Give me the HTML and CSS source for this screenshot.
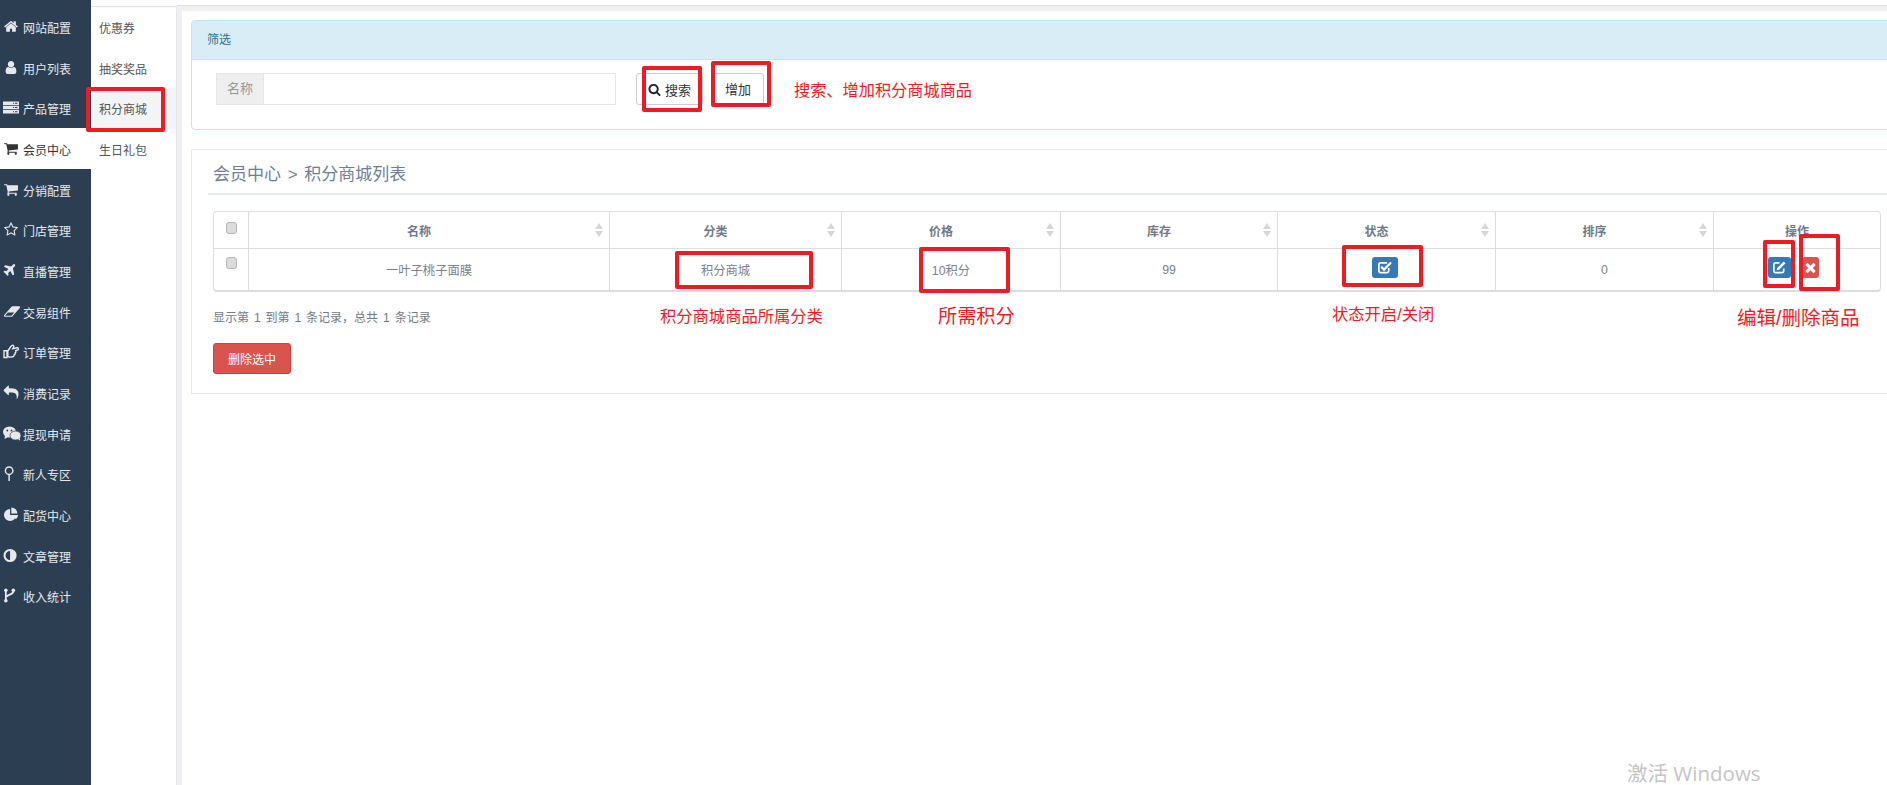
FILE: index.html
```html
<!DOCTYPE html>
<html lang="zh-CN">
<head>
<meta charset="utf-8">
<title>积分商城列表</title>
<link rel="stylesheet" href="styles.css">
</head>
<body>
<div class="app">
  <nav class="side">
    <a class="side-item"><svg class="ic" viewBox="0 0 1792 1792"><path d="M1472 992v480q0 26-19 45t-45 19h-384v-384h-256v384h-384q-26 0-45-19t-19-45v-480q0-1 .5-3t.5-3l575-474 575 474q1 2 1 6zm223-69l-62 74q-8 9-21 11h-3q-13 0-21-7l-692-577-692 577q-12 8-24 7-13-2-21-11l-62-74q-8-10-7-23.500t11-21.500l719-599q32-26 76-26t76 26l244 204v-195q0-14 9-23t23-9h192q14 0 23 9t9 23v408l219 182q10 8 11 21.500t-7 23.500z"/></svg><span>网站配置</span></a>
    <a class="side-item"><svg class="ic" viewBox="0 0 1792 1792"><path d="M1536 1399q0 109-62.500 187t-150.500 78h-854q-88 0-150.500-78t-62.500-187q0-85 8.500-160.500t31.500-152 58.500-131 94-89 134.500-34.500q131 128 313 128t313-128q76 0 134.500 34.500t94 89 58.500 131 31.500 152 8.500 160.500zm-256-887q0 159-112.500 271.500t-271.500 112.500-271.500-112.500-112.500-271.500 112.500-271.500 271.500-112.500 271.500 112.500 112.500 271.500z"/></svg><span>用户列表</span></a>
    <a class="side-item"><svg class="ic" viewBox="0 0 16 14"><path d="M0 1h16v3.400H0zM0 5.300h16v3.400H0zM0 9.600h16V13H0z"/><path class="ic-cut" d="M10 2.200h1v1h-1zM12 2.200h2.500v1H12zM10 6.500h1v1h-1zM12 6.500h2.500v1H12zM10 10.800h1v1h-1zM12 10.800h2.500v1H12z"/></svg><span>产品管理</span></a>
    <a class="side-item is-active"><svg class="ic" viewBox="0 0 1792 1792"><path d="M704 1536q0 52-38 90t-90 38-90-38-38-90 38-90 90-38 90 38 38 90zm896 0q0 52-38 90t-90 38-90-38-38-90 38-90 90-38 90 38 38 90zm128-1088v512q0 24-16.500 42.500t-40.500 21.500l-1044 122q13 60 13 70 0 16-24 64h920q26 0 45 19t19 45-19 45-45 19h-1024q-26 0-45-19t-19-45q0-11 8-31.500t16-36 21.500-40 15.500-29.500l-177-823h-204q-26 0-45-19t-19-45 19-45 45-19h256q16 0 28.500 6.500t19.500 15.500 13 24.500 8 26 5.500 29.500 4.500 26h1201q26 0 45 19t19 45z"/></svg><span>会员中心</span></a>
    <a class="side-item"><svg class="ic" viewBox="0 0 1792 1792"><path d="M704 1536q0 52-38 90t-90 38-90-38-38-90 38-90 90-38 90 38 38 90zm896 0q0 52-38 90t-90 38-90-38-38-90 38-90 90-38 90 38 38 90zm128-1088v512q0 24-16.500 42.500t-40.500 21.500l-1044 122q13 60 13 70 0 16-24 64h920q26 0 45 19t19 45-19 45-45 19h-1024q-26 0-45-19t-19-45q0-11 8-31.500t16-36 21.500-40 15.500-29.500l-177-823h-204q-26 0-45-19t-19-45 19-45 45-19h256q16 0 28.500 6.500t19.500 15.500 13 24.500 8 26 5.500 29.500 4.500 26h1201q26 0 45 19t19 45z"/></svg><span>分销配置</span></a>
    <a class="side-item"><svg class="ic" viewBox="0 0 1792 1792"><path d="M1201 1004l306-297-422-62-189-382-189 382-422 62 306 297-73 421 378-199 377 199zm527-357q0 22-26 48l-363 354 86 500q1 7 1 20 0 50-41 50-19 0-40-12l-449-236-449 236q-22 12-40 12-21 0-31.500-14.500t-10.500-35.500q0-6 2-20l86-500-364-354q-25-27-25-48 0-37 56-46l502-73 225-455q19-41 49-41t49 41l225 455 502 73q56 9 56 46z"/></svg><span>门店管理</span></a>
    <a class="side-item"><svg class="ic" viewBox="0 0 1792 1792"><path d="M1376 160q44 52 12 148t-108 172l-161 161 160 696q5 19-12 33l-128 96q-7 6-19 6-4 0-7-1-15-3-21-16l-279-508-259 259 53 194q5 17-8 31l-96 96q-9 9-23 9h-2q-15-2-24-13l-189-252-252-189q-11-7-13-23-1-13 9-25l96-97q9-9 23-9 6 0 8 1l194 53 259-259-508-279q-14-8-17-24-2-16 9-27l128-128q14-13 30-8l665 159 160-160q76-76 172-108t148 12z"/></svg><span>直播管理</span></a>
    <a class="side-item"><svg class="ic ic-wide" viewBox="0 0 2048 1792"><path d="M960 1408l336-384h-768l-336 384h768zm1013-1077q15 34 9.500 71.500t-30.500 65.500l-896 1024q-38 44-96 44h-768q-38 0-69.500-20.500t-47.500-54.500q-15-34-9.500-71.500t30.500-65.500l896-1024q38-44 96-44h768q38 0 70 20.500t47 54.500z"/></svg><span>交易组件</span></a>
    <a class="side-item"><svg class="ic" viewBox="0 0 16 14"><path d="M1 6.200h3V13H1zM4.800 6.500 7.800 2 9.300 .8c1.200-.4 1.700.8 1.200 2L9.700 4.300l4.300-1c1.500-.3 2.100 1.600.6 2.200l-1.900.7c.5 1 .2 1.900-.6 2.200.3 1-.2 1.800-1 2 .1 1-.5 1.700-1.400 1.800L7 12.600c-1 .1-1.500-.4-2.200-.8z" fill="none" stroke="currentColor" stroke-width="1.400"/></svg><span>订单管理</span></a>
    <a class="side-item"><svg class="ic" viewBox="0 0 1792 1792"><path d="M1792 1120q0 166-127 451-3 7-10.500 24t-13.500 30-13 22q-12 17-28 17-15 0-23.500-10t-8.500-25q0-9 2.500-26.500t2.500-23.500q5-68 5-123 0-101-17.500-181t-48.500-138.500-80-101-105.500-69.500-133-42.500-154-21.500-175.500-6h-224v256q0 26-19 45t-45 19-45-19l-512-512q-19-19-19-45t19-45l512-512q19-19 45-19t45 19 19 45v256h224q713 0 875 403 53 134 53 333z"/></svg><span>消费记录</span></a>
    <a class="side-item"><svg class="ic ic-wide" viewBox="0 0 18 15"><ellipse cx="6.500" cy="6" rx="6.500" ry="5.500"/><path d="M2 9.500 1.500 13l3.500-2z"/><ellipse class="ic-ring" cx="12.500" cy="9.500" rx="5.500" ry="4.500"/><path d="M15 13l2 1.700-.3-3z"/><circle class="ic-dot" cx="4.300" cy="4.500" r=".9"/><circle class="ic-dot" cx="8.500" cy="4.500" r=".9"/></svg><span>提现申请</span></a>
    <a class="side-item"><svg class="ic" viewBox="0 0 16 16"><circle cx="6" cy="5" r="4" fill="none" stroke="currentColor" stroke-width="1.500"/><path d="M5.200 8.500h1.600V16H5.200z"/></svg><span>新人专区</span></a>
    <a class="side-item"><svg class="ic" viewBox="0 0 16 16"><path d="M7 2a6.500 6.500 0 1 0 6.500 6.500H7z"/><path d="M8.300 .5a6.500 6.500 0 0 1 6.500 6.500H8.300z"/><path d="M9 8.500h6.500a6.500 6.500 0 0 1-2.200 4.600z"/></svg><span>配货中心</span></a>
    <a class="side-item"><svg class="ic" viewBox="0 0 16 16"><path fill-rule="evenodd" d="M7 1a7 7 0 1 0 0 14A7 7 0 0 0 7 1zm0 2.200v9.600a4.800 4.800 0 0 1 0-9.600z"/></svg><span>文章管理</span></a>
    <a class="side-item"><svg class="ic" viewBox="0 0 16 16"><path d="M2.500 3.500v9M10.500 3.500c0 4-6 3-7.500 6" fill="none" stroke="currentColor" stroke-width="1.900"/><circle cx="2.500" cy="2.500" r="1.900"/><circle cx="2.500" cy="13.500" r="1.900"/><circle cx="10.500" cy="2.500" r="1.900"/></svg><span>收入统计</span></a>
  </nav>

  <nav class="subnav">
    <a class="sub-item">优惠券</a>
    <a class="sub-item">抽奖奖品</a>
    <a class="sub-item is-active">积分商城</a>
    <a class="sub-item">生日礼包</a>
  </nav>

  <main class="main">
    <section class="panel-filter">
      <header class="panel-filter-head">筛选</header>
      <div class="panel-filter-body">
        <div class="input-group">
          <span class="addon">名称</span>
          <span class="input"></span>
        </div>
        <button class="btn btn-search"><svg class="ic-search" viewBox="0 0 1792 1792"><path d="M1216 832q0-185-131.500-316.500t-316.500-131.500-316.500 131.500-131.500 316.500 131.500 316.500 316.500 131.500 316.500-131.500 131.500-316.500zm512 832q0 52-38 90t-90 38q-54 0-90-38l-343-342q-179 124-399 124-143 0-273.500-55.500t-225-150-150-225-55.500-273.500 55.500-273.500 150-225 225-150 273.500-55.500 273.500 55.500 225 150 150 225 55.500 273.500q0 220-124 399l343 343q37 37 37 90z"/></svg>搜索</button>
        <button class="btn btn-add">增加</button>
      </div>
    </section>

    <section class="panel-list">
      <h2 class="list-title">会员中心 &gt; 积分商城列表</h2>
      <div class="list-body">
        <table class="grid">
          <colgroup>
            <col class="c-check"><col class="c-name"><col class="c-cat"><col class="c-price"><col class="c-stock"><col class="c-status"><col class="c-sort"><col class="c-op">
          </colgroup>
          <thead>
            <tr>
              <th class="cell-check"><input class="check" type="checkbox"></th>
              <th><div class="th-in"><span>名称</span><i class="sort"></i></div></th>
              <th><div class="th-in"><span>分类</span><i class="sort"></i></div></th>
              <th><div class="th-in"><span>价格</span><i class="sort"></i></div></th>
              <th><div class="th-in"><span>库存</span><i class="sort"></i></div></th>
              <th><div class="th-in"><span>状态</span><i class="sort"></i></div></th>
              <th><div class="th-in"><span>排序</span><i class="sort"></i></div></th>
              <th>操作</th>
            </tr>
          </thead>
          <tbody>
            <tr>
              <td class="cell-check"><input class="check" type="checkbox"></td>
              <td>一叶子桃子面膜</td>
              <td>积分商城</td>
              <td>10积分</td>
              <td>99</td>
              <td><span class="mini mini-blue mini-status"><svg class="ic-mini" viewBox="0 0 16 16"><path d="M12.500 8.500v3.300c0 1-.7 1.700-1.700 1.700H3.700c-1 0-1.700-.7-1.700-1.700V4.700C2 3.700 2.700 3 3.700 3h7" fill="none" stroke="currentColor" stroke-width="1.800"/><path d="M4.500 7.200 7.500 10.200 15 2.700" fill="none" stroke="currentColor" stroke-width="2.400"/></svg></span></td>
              <td>0</td>
              <td><span class="ops"><span class="mini mini-blue mini-edit"><svg class="ic-mini" viewBox="0 0 16 16"><path d="M12.500 9v2.800c0 1-.7 1.700-1.700 1.700H3.700c-1 0-1.700-.7-1.700-1.700V4.700C2 3.700 2.700 3 3.700 3H8" fill="none" stroke="currentColor" stroke-width="1.800"/><path d="M5.500 8.500 12.500 1.500l2 2-7 7-2.500.5z"/></svg></span><span class="mini mini-red"><svg class="ic-mini" viewBox="0 0 1792 1792"><path d="M1490 1322q0 40-28 68l-136 136q-28 28-68 28t-68-28l-294-294-294 294q-28 28-68 28t-68-28l-136-136q-28-28-28-68t28-68l294-294-294-294q-28-28-28-68t28-68l136-136q28-28 68-28t68 28l294 294 294-294q28-28 68-28t68 28l136 136q28 28 28 68t-28 68l-294 294 294 294q28 28 28 68z"/></svg></span></span></td>
            </tr>
          </tbody>
        </table>
        <p class="summary">显示第 1 到第 1 条记录，总共 1 条记录</p>
        <button class="btn-danger">删除选中</button>
      </div>
    </section>
  </main>
</div>

<div class="mark mark-nav"></div>
<div class="mark mark-search"></div>
<div class="mark mark-add"></div>
<div class="mark mark-cat"></div>
<div class="mark mark-price"></div>
<div class="mark mark-status"></div>
<div class="mark mark-edit"></div>
<div class="mark mark-del"></div>

<div class="note note-top">搜索、增加积分商城商品</div>
<div class="note note-cat">积分商城商品所属分类</div>
<div class="note note-price">所需积分</div>
<div class="note note-status">状态开启/关闭</div>
<div class="note note-ops">编辑/删除商品</div>

<div class="watermark">激活 Windows</div>
</body>
</html>
```

FILE: styles.css
```css
* { box-sizing: border-box; }
html, body { margin: 0; height: 785px; overflow: hidden; background: #fff; }
body {
  position: relative;
  font-family: "Liberation Sans", "Noto Sans CJK SC", sans-serif;
  font-size: 12px;
  color: #676a6c;
}
.app { display: flex; height: 785px; overflow: hidden; }

/* primary sidebar */
.side { flex: none; width: 91px; padding-top: 6px; background: #2c3e52; }
.side-item {
  display: flex;
  align-items: center;
  height: 40.7px;
  padding-left: 3px;
  color: #e6e9ec;
}
.side-item span { padding-top: 2px; }
.side-item.is-active { background: #fff; color: #333; }
.ic { flex: none; width: 16px; height: 15px; margin-right: 4px; fill: currentColor; }
.ic-wide { width: 18px; margin-right: 2px; }
.ic-cut { fill: #2c3e52; }
.ic-ring { stroke: #2c3e52; stroke-width: .7; }
.ic-dot { fill: #2c3e52; }

/* secondary nav */
.subnav {
  flex: none;
  width: 86px;
  margin-top: 6px;
  border-top: 1px solid #dfe3ea;
  border-right: 1px solid #e4e7ec;
  background: #fff;
}
.sub-item {
  display: flex;
  align-items: center;
  height: 40.7px;
  padding-left: 8px;
  color: #555;
}
.sub-item.is-active { background: #f3f4f6; }

/* main column */
.main {
  flex: none;
  width: 1730px;
  margin-top: 5px;
  padding: 14px 0 0 14px;
  border-top: 1px solid #dfe1e6;
  background: #fff;
  box-shadow: inset 5px 5px 0 #f0f0f0;
}
.panel-filter {
  height: 110px;
  border: 1px solid #bce8f1;
  border-radius: 4px;
  background: #fff;
}
.panel-filter-head {
  height: 39px;
  padding: 0 15px;
  background: #d9edf7;
  border-bottom: 1px solid #bce8f1;
  color: #31708f;
  line-height: 39px;
  font-size: 12px;
}
.panel-filter-body {
  display: flex;
  align-items: center;
  height: 69px;
  padding: 0 0 11px 24px;
}
.input-group { display: flex; width: 400px; height: 32px; }
.addon {
  flex: none;
  width: 47px;
  background: #eee;
  border: 1px solid #e5e6e7;
  border-right: 0;
  color: #999;
  font-size: 13px;
  line-height: 30px;
  text-align: center;
}
.input { flex: 1; border: 1px solid #e5e6e7; background: #fff; }
.btn {
  display: flex;
  align-items: center;
  justify-content: center;
  height: 32px;
  padding: 0;
  border: 1px solid #ccc;
  border-radius: 3px;
  background: #fff;
  color: #333;
  font: inherit;
  font-size: 13px;
}
.btn-search { width: 67px; margin-left: 20px; gap: 4px; }
.ic-search { width: 13px; height: 13px; fill: #222; }
.btn-add { width: 52px; margin-left: 9px; padding-bottom: 2px; }

.panel-list {
  height: 245px;
  margin-top: 19px;
  border: 1px solid #e7eaec;
  background: #fff;
}
.list-title {
  height: 45px;
  margin: 0 0 0 16px;
  padding: 12px 0 0 5px;
  border-bottom: 2px solid #e7eaec;
  color: #6d7f96;
  font-size: 17px;
  font-weight: 400;
  line-height: 26px;
  word-spacing: 2px;
}
.list-body { padding: 16px 0 0 21px; }

/* table */
.grid {
  width: 1668px;
  table-layout: fixed;
  border-collapse: separate;
  border-spacing: 0;
  border: 1px solid #ddd;
  border-bottom-width: 2px;
  border-radius: 4px;
  color: #78828f;
}
.c-check { width: 34px; }
.c-name { width: 361px; }
.c-cat { width: 232px; }
.c-price { width: 219px; }
.c-stock { width: 217px; }
.c-status { width: 218px; }
.c-sort { width: 218px; }
.c-op { width: 167px; }
.grid th, .grid td {
  padding: 0;
  border-left: 1px solid #ddd;
  text-align: center;
  font-size: 12px;
}
.grid td { font-size: 12.300px; }
.grid th:first-child, .grid td:first-child { border-left: 0; }
.grid th {
  height: 37px;
  border-bottom: 1px solid #ddd;
  font-weight: 700;
  color: #6f7a88;
}
.grid td { height: 41px; }
.th-in { display: flex; align-items: center; }
.th-in span { flex: 1; }
.sort {
  flex: none;
  display: flex;
  flex-direction: column;
  gap: 1.500px;
  width: 8px;
  margin: 0 6px 0 6px;
}
.sort::before, .sort::after {
  content: "";
  width: 0;
  height: 0;
  border-left: 4px solid transparent;
  border-right: 4px solid transparent;
}
.sort::before { border-bottom: 6.500px solid #d6d6d6; }
.sort::after { border-top: 6.500px solid #d6d6d6; }
.cell-check { vertical-align: top; }
.check {
  display: block;
  appearance: none;
  width: 11px;
  height: 12px;
  margin: 10px auto 0;
  border: 1px solid #b5b5b5;
  border-radius: 3px;
  background: #dcdcdc;
}
td.cell-check .check { margin-top: 8px; }

.mini {
  display: inline-flex;
  align-items: center;
  justify-content: center;
  height: 21px;
  border-radius: 3px;
  color: #fff;
  vertical-align: middle;
  margin-bottom: 5px;
}
.mini-blue { width: 26px; background: #337ab7; }
.mini-status { margin-right: 4px; }
.mini-edit { width: 23px; }
.mini-red { width: 17px; background: #d9534f; }
.ic-mini { width: 15px; height: 15px; fill: currentColor; }
.ops { display: inline-flex; gap: 11px; margin-right: 7px; vertical-align: middle; }

.summary {
  margin: 18px 0 0;
  color: #6f7a88;
  line-height: 17px;
  word-spacing: 1.600px;
}
.btn-danger {
  display: block;
  width: 78px;
  height: 31px;
  margin-top: 16px;
  padding: 0;
  border: 1px solid #d43f3a;
  border-radius: 3px;
  background: #d9534f;
  color: #fff;
  font: inherit;
}

/* red annotation overlays */
.mark { position: absolute; border: 4px solid #ed1c24; border-radius: 2px; }
.mark-nav { left: 86px; top: 87px; width: 79px; height: 45px; }
.mark-search { left: 642px; top: 66px; width: 60px; height: 46px; }
.mark-add { left: 711px; top: 61px; width: 60px; height: 46px; }
.mark-cat { left: 675px; top: 251px; width: 138px; height: 38px; }
.mark-price { left: 919px; top: 247px; width: 91px; height: 46px; }
.mark-status { left: 1342px; top: 245px; width: 81px; height: 42px; }
.mark-edit { left: 1763px; top: 240px; width: 32px; height: 48px; }
.mark-del { left: 1799px; top: 234px; width: 41px; height: 57px; }

.note { position: absolute; color: #ed1c24; white-space: nowrap; line-height: 24px; }
.note-top { left: 794px; top: 78px; font-size: 16.200px; }
.note-cat { left: 660px; top: 304px; font-size: 16.300px; }
.note-price { left: 938px; top: 305px; font-size: 19.200px; }
.note-status { left: 1332px; top: 302px; font-size: 16.300px; }
.note-ops { left: 1737px; top: 306px; font-size: 19.500px; }

.watermark {
  position: absolute;
  left: 1627px;
  top: 759px;
  color: #c4c4c4;
  font-family: "Open Sans", "Noto Sans CJK SC", sans-serif;
  font-size: 20.500px;
  line-height: 28px;
  white-space: nowrap;
}
```
